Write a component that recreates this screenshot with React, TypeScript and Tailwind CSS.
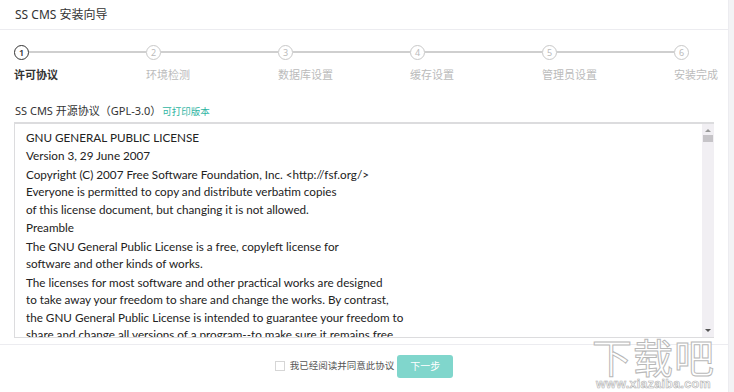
import React from 'react';

const steps = ['许可协议', '环境检测', '数据库设置', '缓存设置', '管理员设置', '安装完成'];

const license: string[][] = [
  ['GNU GENERAL PUBLIC LICENSE'],
  ['Version 3, 29 June 2007'],
  [
    'Copyright (C) 2007 Free Software Foundation, Inc. <http://fsf.org/>',
    'Everyone is permitted to copy and distribute verbatim copies',
    'of this license document, but changing it is not allowed.',
  ],
  ['Preamble'],
  ['The GNU General Public License is a free, copyleft license for', 'software and other kinds of works.'],
  [
    'The licenses for most software and other practical works are designed',
    'to take away your freedom to share and change the works. By contrast,',
    'the GNU General Public License is intended to guarantee your freedom to',
    'share and change all versions of a program--to make sure it remains free',
    'software for all its users.',
  ],
];

const cjk = { fontFamily: '"Noto Sans", "Noto Sans CJK SC", sans-serif' };

const App: React.FC = () => {
  return (
    <div className="relative w-[734px] h-[392px] overflow-hidden bg-white flex" style={cjk}>
      <div className="flex-1 flex flex-col">
        {/* header */}
        <div className="h-[30px] border-b border-[#ececf0] px-[15px] flex items-center text-[12px] text-[#333]">
          SS CMS 安装向导
        </div>

        {/* steps */}
        <div className="flex pl-[14px] pt-[14px]">
          {steps.map((s, i) => {
            const active = i === 0;
            const last = i === steps.length - 1;
            return (
              <div key={s} className={last ? 'flex-1' : 'w-[132px]'}>
                <div className="flex items-center h-[16px]">
                  <div
                    className={`w-[15px] h-[15px] rounded-full border-[1.5px] flex items-center justify-center text-[9px] leading-none shrink-0 ${
                      active ? 'border-[#333] text-[#333] font-semibold' : 'border-[#c8c8c8] text-[#bbb]'
                    }`}
                  >
                    {i + 1}
                  </div>
                  {!last && <div className="flex-1 h-[1.5px] bg-[#cfcfcf]" />}
                </div>
                <div
                  className={`mt-[9px] text-[11px] leading-none whitespace-nowrap ${
                    active ? 'font-bold text-[#333]' : 'text-[#bbb]'
                  }`}
                >
                  {s}
                </div>
              </div>
            );
          })}
        </div>

        {/* license title */}
        <div className="flex items-baseline px-[15px] mt-[25px] text-[11px] text-[#333] leading-none">
          <span>SS CMS 开源协议（GPL-3.0）</span>
          <span className="ml-[1px] text-[9.5px] text-[#2fb5a3]">可打印版本</span>
        </div>

        {/* license box */}
        <div className="mx-[14px] mt-[5px] h-[216px] border-t-2 border-l border-b border-[#dcdcde] flex">
          <div
            className="flex-1 overflow-hidden pl-[11px] pt-[5px] text-[11.7px] leading-[17.5px] text-[#222]"
            style={{ fontFamily: 'Lato, "Noto Sans", sans-serif' }}
          >
            {license.map((p, i) => (
              <p key={i} className="mb-[1px]">
                {p.map((l) => (
                  <span key={l} className="block whitespace-nowrap">
                    {l}
                  </span>
                ))}
              </p>
            ))}
          </div>
          <div className="w-[12px] bg-[#f1eff3] flex flex-col items-center">
            <div className="mt-[5px] w-0 h-0 border-l-[3px] border-r-[3px] border-b-[3px] border-l-transparent border-r-transparent border-b-[#999]" />
            <div className="mt-[3px] w-[10px] h-[7px] bg-[#c6c4c8]" />
            <div className="flex-1" />
            <div className="mb-[5px] w-0 h-0 border-l-[3px] border-r-[3px] border-t-[3px] border-l-transparent border-r-transparent border-t-[#555]" />
          </div>
        </div>

        {/* footer */}
        <div className="mt-[6px] border-t border-[#ececf0] flex-1 flex items-start justify-center pt-[10px]">
          <div className="flex items-center">
            <div className="w-[10px] h-[10px] border border-[#d6d6d6] bg-white" />
            <span className="ml-[5px] text-[9.5px] text-[#555]">我已经阅读并同意此协议</span>
            <button className="ml-[3px] w-[56px] h-[23px] rounded-[3px] bg-[#80d6cc] text-white text-[10px]">
              下一步
            </button>
          </div>
        </div>
      </div>
      <div className="w-[6px] bg-[#f3f3f5] border-l border-[#ececf0]" />

      {/* watermark */}
      <div className="absolute right-[19px] bottom-[1px] flex flex-col items-center pointer-events-none">
        <span
          className="text-[40px] leading-[44px] tracking-[1px] text-white"
          style={{ WebkitTextStroke: '1px #b8b8b8', fontFamily: '"Noto Sans CJK SC", sans-serif' }}
        >
          下载吧
        </span>
        <span
          className="text-[12.5px] leading-[13px] font-bold text-white tracking-[0.3px]"
          style={{ WebkitTextStroke: '0.6px #b0b0b0', fontFamily: '"Liberation Sans", sans-serif' }}
        >
          www.xiazaiba.com
        </span>
      </div>
    </div>
  );
};

export default App;
